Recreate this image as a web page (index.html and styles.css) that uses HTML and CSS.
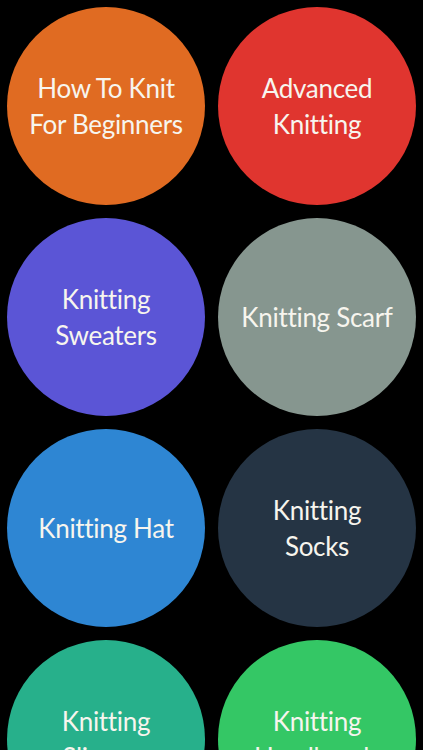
FILE: index.html
```html
<!DOCTYPE html>
<html lang="en">
<head>
<meta charset="utf-8">
<title>Knitting</title>
<link rel="stylesheet" href="styles.css">
</head>
<body>
<main class="grid">
  <a class="tile orange" href="#"><span>How To Knit<br>For Beginners</span></a>
  <a class="tile red" href="#"><span>Advanced<br>Knitting</span></a>
  <a class="tile purple" href="#"><span>Knitting<br>Sweaters</span></a>
  <a class="tile grey" href="#"><span>Knitting Scarf</span></a>
  <a class="tile blue" href="#"><span>Knitting Hat</span></a>
  <a class="tile navy" href="#"><span>Knitting<br>Socks</span></a>
  <a class="tile teal" href="#"><span>Knitting<br>Slippers</span></a>
  <a class="tile green" href="#"><span>Knitting<br>Headbands</span></a>
</main>
</body>
</html>
```
FILE: styles.css
```css
html, body {
  margin: 0;
  padding: 0;
  background: #000;
  height: 100%;
  overflow: hidden;
}
.grid {
  display: grid;
  grid-template-columns: 198px 198px;
  gap: 13px;
  padding: 7px;
}
.tile {
  width: 198px;
  height: 198px;
  border-radius: 50%;
  display: flex;
  align-items: center;
  justify-content: center;
  text-align: center;
  text-decoration: none;
  color: #f7f5ee;
  font-family: "Lato", "Open Sans", sans-serif;
  font-size: 26px;
  line-height: 36px;
  letter-spacing: -0.3px;
}
.orange { background: #e06b22; }
.red { background: #e0352f; }
.purple { background: #5b55d6; }
.grey { background: #86968f; }
.blue { background: #2e86d3; }
.navy { background: #253444; }
.teal { background: #27b08b; }
.green { background: #34c765; }
```
